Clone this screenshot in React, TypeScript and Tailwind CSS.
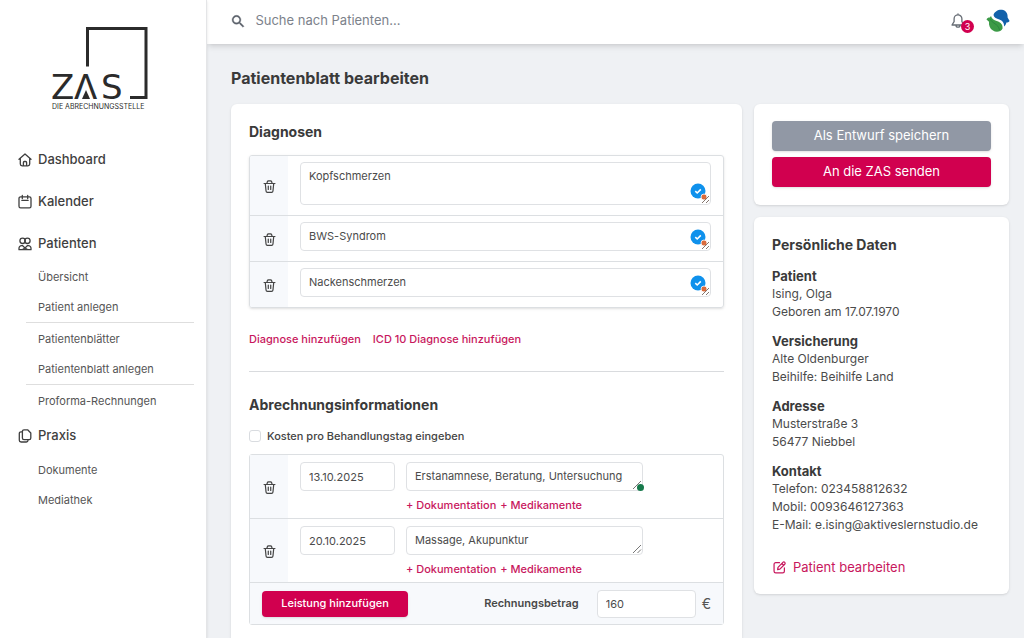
import { useState, type ReactNode } from "react";

function Icon({ children, className = "size-4" }: { children: ReactNode; className?: string }) {
  return (
    <svg viewBox="0 0 16 16" fill="none" stroke="currentColor" strokeWidth="1.3" strokeLinecap="round" strokeLinejoin="round" className={`shrink-0 ${className}`} aria-hidden="true">
      {children}
    </svg>
  );
}

const HomeIcon = () => (
  <Icon>
    <path d="M2 7.2 8 2l6 5.2M3.3 6.3V12a1.8 1.8 0 0 0 1.8 1.8h5.8a1.8 1.8 0 0 0 1.8-1.8V6.3M6.4 13.6V10.500a1 1 0 0 1 1-1h1.200a1 1 0 0 1 1 1v3.100" />
  </Icon>
);
const CalendarIcon = () => (
  <Icon>
    <rect x="2" y="2.800" width="12" height="11" rx="1.600" />
    <path d="M5.300 1.500v3M10.700 1.500v3M4.800 6.300h6.400" />
  </Icon>
);
const UsersIcon = () => (
  <Icon>
    <circle cx="5.600" cy="4.800" r="2.700" />
    <circle cx="10.400" cy="4.800" r="2.700" />
    <path d="M2 13.700v-1.500A2.600 2.600 0 0 1 4.600 9.600h.8L8 12l2.600-2.400h.8a2.600 2.600 0 0 1 2.600 2.600v1.500ZM5.500 13.500 8 12l2.500 1.500" />
  </Icon>
);
const CopyIcon = () => (
  <Icon>
    <path d="M7 1.800h3.600L13.800 5v5a1.600 1.600 0 0 1-1.600 1.600H7A1.600 1.600 0 0 1 5.400 10V3.400A1.600 1.600 0 0 1 7 1.800Z" />
    <path d="M5.200 3.800H4A1.700 1.700 0 0 0 2.300 5.500v6.700A1.800 1.800 0 0 0 4.100 14h5.200a1.700 1.700 0 0 0 1.700-1.700v-.5" />
  </Icon>
);
const TrashIcon = () => (
  <Icon className="size-[15px]">
    <path d="M2.200 4.800h11.600M3.500 4.800l.8 8a1.500 1.500 0 0 0 1.500 1.400h4.400a1.500 1.500 0 0 0 1.500-1.400l.8-8M5.200 4.600l.5-1.700a1.300 1.300 0 0 1 1.200-.9h2.200a1.300 1.300 0 0 1 1.200.9l.5 1.700M6.700 7.500v3.700M9.300 7.500v3.700" />
  </Icon>
);

function Logo() {
  return (
    <svg viewBox="0 0 100 88" className="h-[88px] w-[100px]" role="img" aria-label="ZAS Die Abrechnungsstelle">
      <path d="M37.500 42.500V4.500h58.500v69H80" fill="none" stroke="#2b2b2b" strokeWidth="3" />
      <g fill="#2b2b2b">
        <g fontFamily="DejaVu Sans, sans-serif" fontSize="34">
          <text x="1" y="75">Z</text>
          <text x="24" y="75">Λ</text>
          <text x="51" y="75">S</text>
        </g>
        <text x="2" y="85" fontFamily="Inter, sans-serif" fontSize="7">DIE ABRECHNUNGSSTELLE</text>
      </g>
      <path d="m36 66 4 9h-8Z" fill="#2b2b2b" />
    </svg>
  );
}

function NavMain({ icon, label }: { icon: ReactNode; label: string }) {
  return (
    <a href="#" className="flex h-6 items-center gap-[5px] px-[17px] text-[13px] font-medium text-[#3f3f3f]">
      {icon}
      {label}
    </a>
  );
}

function NavSub({ label }: { label: string }) {
  return (
    <a href="#" className="flex h-[30px] items-center pl-3 text-[11px] text-[#555]">
      {label}
    </a>
  );
}

function Sidebar() {
  return (
    <aside className="relative z-20 w-[207px] shrink-0 border-r border-[#e4e5e7] bg-white shadow-sm">
      <div className="flex justify-center pt-6 pr-[6px]">
        <Logo />
      </div>
      <nav className="flex flex-col pt-9">
        <div className="flex flex-col gap-[18px]">
          <NavMain icon={<HomeIcon />} label="Dashboard" />
          <NavMain icon={<CalendarIcon />} label="Kalender" />
          <NavMain icon={<UsersIcon />} label="Patienten" />
        </div>
        <div className="mt-[6px] mr-3 ml-[26px] flex flex-col">
          <NavSub label="Übersicht" />
          <NavSub label="Patient anlegen" />
          <div className="border-y border-[#dedede] pt-[1px]">
            <NavSub label="Patientenblätter" />
            <NavSub label="Patientenblatt anlegen" />
          </div>
          <div className="pt-[1px]">
            <NavSub label="Proforma-Rechnungen" />
          </div>
        </div>
        <div className="mt-2">
          <NavMain icon={<CopyIcon />} label="Praxis" />
        </div>
        <div className="mt-[7px] ml-[26px]">
          <NavSub label="Dokumente" />
          <NavSub label="Mediathek" />
        </div>
      </nav>
    </aside>
  );
}

function Header() {
  return (
    <header className="relative z-10 flex h-11 items-center justify-between bg-white pr-[14px] pb-[2px] pl-[23px] shadow-md">
      <label className="flex flex-1 items-center gap-[9px] text-[#5b616b]">
        <svg viewBox="0 0 24 24" fill="currentColor" className="size-[17px]" aria-hidden="true">
          <path d="M15.500 14h-.79l-.28-.27A6.470 6.470 0 0 0 16 9.500 6.500 6.500 0 1 0 9.500 16c1.610 0 3.090-.59 4.230-1.570l.27.28v.79l5 4.990L20.490 19l-4.990-5zm-6 0C7.010 14 5 11.990 5 9.500S7.010 5 9.500 5 14 7.010 14 9.500 11.990 14 9.500 14z" stroke="currentColor" strokeWidth=".5" />
        </svg>
        <input type="search" aria-label="Suche nach Patienten" placeholder="Suche nach Patienten..." className="w-full bg-transparent text-[13px] outline-none placeholder:text-[#7c828b]" />
      </label>
      <div className="flex items-center gap-3">
        <button type="button" aria-label="Benachrichtigungen" className="relative flex h-5 w-6 items-center text-[#666c74]">
          <Icon>
            <path d="M8 .8v1M8 1.800a3.900 3.900 0 0 0-3.900 3.900v3L2 12h12l-2.100-3.300v-3A3.900 3.900 0 0 0 8 1.800ZM6 12.200a2 2 0 0 0 4 0" />
          </Icon>
          <span className="absolute right-0 -bottom-[2px] flex size-[13px] items-center justify-center rounded-full bg-[#d1004f] text-[9px] text-white">3</span>
        </button>
        <button type="button" aria-label="Profil">
          <svg viewBox="0 0 24 24" className="size-6" aria-hidden="true">
            <path d="M7.500 6C8.500 2.500 12 .5 16 .8c3.500.4 6 3.400 5.600 7.800l2 3.400c-.8 1-2 1.600-3.200 1.600-.2 1.500-.9 2.800-2.200 4-.1-3.900-1.600-5.700-4.900-7C10.600 9.500 8 8.800 7.500 6Z" fill="#1261aa" />
            <path d="M5 7c.6 2.800 3 4 5.700 4.900 4.300 1.400 6.500 3.900 5.800 7.900-1.500 3-6.300 4-9.500 1.800-3.200-2-4.300-5.100-4-8.900L.5 10.600C1.200 9 2.600 8.500 3.800 8.600Z" fill="#3c9a46" />
            <path d="M4.500 10c1 4.500 8 4.500 9 11" fill="none" stroke="#27813c" strokeWidth=".8" />
          </svg>
        </button>
      </div>
    </header>
  );
}

const field = "block rounded border border-[#dfe1e4] bg-white px-2 py-[5px] text-[11px] leading-4 text-[#4b4b4b] outline-none";
const link = "text-[#c8175d]";
const heading = "text-sm leading-5 font-bold text-[#3a3a3a]";

function Grip({ color = "#777" }: { color?: string }) {
  return (
    <svg viewBox="0 0 10 10" className="size-[10px]" stroke={color} strokeWidth="1" aria-hidden="true">
      <path d="m1 9 8-8M5.500 9 9 5.500" />
    </svg>
  );
}

function DeleteCell({ label }: { label: string }) {
  return (
    <td className="w-[38px] bg-[#f7f9fc] pb-[2px] text-center align-middle">
      <button type="button" aria-label={label} className="inline-flex align-middle text-[#454545]">
        <TrashIcon />
      </button>
    </td>
  );
}

const diagnoses = [
  { text: "Kopfschmerzen", rows: "h-[43px]" },
  { text: "BWS-Syndrom", rows: "h-[29px]" },
  { text: "Nackenschmerzen", rows: "h-[29px]" },
];

function Diagnoses() {
  return (
    <section>
      <h2 className={heading}>Diagnosen</h2>
      <div className="mt-[13px] overflow-hidden rounded-[3px] border border-[#dcdfe2] shadow-sm">
        <table className="w-full border-collapse">
          <tbody className="divide-y divide-[#dcdfe2]">
            {diagnoses.map((d) => (
              <tr key={d.text}>
                <DeleteCell label={`${d.text} löschen`} />
                <td className="pt-[6px] pr-3 pb-[10px] pl-3">
                  <div className="relative">
                    <textarea aria-label="Diagnose" defaultValue={d.text} className={`${field} ${d.rows} w-full resize-none overflow-hidden`} />
                    <span className="absolute right-0 bottom-[1px] size-5">
                      <svg viewBox="0 0 20 20" className="size-5 overflow-visible" aria-hidden="true">
                        <circle cx="7" cy="7" r="7.500" fill="#0f91ec" />
                        <path d="m4.300 7.200 1.900 1.800 3.600-3.600" fill="none" stroke="#fff" strokeWidth="1.600" />
                        <circle cx="13" cy="13" r="3" fill="#d96b3c" stroke="#fff" strokeWidth=".8" />
                        <path d="m11 19 7-7M15 19l3-3" stroke="#85766e" strokeWidth="1" />
                      </svg>
                    </span>
                  </div>
                </td>
              </tr>
            ))}
          </tbody>
        </table>
      </div>
      <div className="mt-[23px] flex gap-3 text-[11px] leading-4 font-medium">
        <a href="#" className={link}>Diagnose hinzufügen</a>
        <a href="#" className={link}>ICD 10 Diagnose hinzufügen</a>
      </div>
    </section>
  );
}

const services = [
  { date: "13.10.2025", text: "Erstanamnese, Beratung, Untersuchung", marked: true },
  { date: "20.10.2025", text: "Massage, Akupunktur", marked: false },
];

function Billing() {
  const [perDay, setPerDay] = useState(false);
  return (
    <section className="mt-6 border-t border-[#d9dbde] pt-[23px]">
      <h2 className={heading}>Abrechnungsinformationen</h2>
      <label className="mt-[13px] flex items-center gap-[6px] text-[11px] leading-4 font-medium text-[#444]">
        <input type="checkbox" checked={perDay} onChange={(e) => setPerDay(e.target.checked)} className="size-3 appearance-none rounded-[3px] border border-[#d9dce0] bg-white checked:bg-[#d1004f]" />
        Kosten pro Behandlungstag eingeben
      </label>
      <div className="mt-[10px] rounded-[3px] border border-[#dcdfe2]">
        <table className="w-full border-collapse">
          <tbody className="divide-y divide-[#dcdfe2]">
            {services.map((s) => (
              <tr key={s.date}>
                <DeleteCell label={`Leistung vom ${s.date} löschen`} />
                <td className="w-[118px] pt-[7px] pl-3 align-top">
                  <input type="text" aria-label="Datum" defaultValue={s.date} className={`${field} h-[29px] w-[95px]`} />
                </td>
                <td className="pt-[7px] pb-[5px] align-top">
                  <div className="relative w-[237px]">
                    <textarea aria-label="Leistung" defaultValue={s.text} className={`${field} h-[29px] w-full resize-none overflow-hidden whitespace-nowrap`} />
                    <span className="absolute right-[1px] bottom-[1px]">
                      <Grip />
                    </span>
                    {s.marked && <span className="absolute -right-[1px] bottom-0 size-[7px] rounded-full bg-[#16794b]" />}
                  </div>
                  <div className="mt-[6px] flex gap-1 text-[11px] leading-4 font-medium">
                    <a href="#" className={link}>+ Dokumentation</a>
                    <a href="#" className={link}>+ Medikamente</a>
                  </div>
                </td>
              </tr>
            ))}
          </tbody>
        </table>
        <div className="flex h-[42px] items-center border-t border-[#dcdfe2] bg-[#f7f9fc] px-3">
          <button type="button" className="h-[26px] w-[146px] rounded bg-[#d1004f] text-[11px] font-medium text-white shadow-sm">Leistung hinzufügen</button>
          <label htmlFor="amount" className="ml-auto text-[11px] font-semibold text-[#484848]">Rechnungsbetrag</label>
          <input id="amount" type="text" defaultValue="160" className={`${field} ml-[18px] h-[28px] w-[99px]`} />
          <span className="ml-[6px] text-sm text-[#555]">€</span>
        </div>
      </div>
    </section>
  );
}

const details = [
  { title: "Patient", lines: ["Ising, Olga", "Geboren am 17.07.1970"] },
  { title: "Versicherung", lines: ["Alte Oldenburger", "Beihilfe: Beihilfe Land"] },
  { title: "Adresse", lines: ["Musterstraße 3", "56477 Niebbel"] },
  { title: "Kontakt", lines: ["Telefon: 023458812632", "Mobil: 0093646127363", "E-Mail: e.ising@aktiveslernstudio.de"] },
];

const card = "rounded-md bg-white shadow-sm";

export default function App() {
  return (
    <div className="flex min-h-screen bg-[#eff1f4] font-['Inter','Noto_Sans',sans-serif]">
      <Sidebar />
      <div className="flex min-w-0 flex-1 flex-col">
        <Header />
        <main className="flex flex-1 flex-col pt-[22px] pr-[15px] pl-6">
          <h1 className="text-base leading-6 font-bold text-[#3a3a3a]">Patientenblatt bearbeiten</h1>
          <div className="mt-[14px] flex flex-1 gap-3">
            <div className={`${card} min-w-0 flex-1 rounded-b-none px-[18px] pt-[18px]`}>
              <Diagnoses />
              <Billing />
            </div>
            <div className="flex w-[255px] shrink-0 flex-col gap-3">
              <div className={`${card} flex flex-col gap-[6px] px-[18px] pt-[17px] pb-[18px] text-[13px] text-white`}>
                <button type="button" className="h-[30px] rounded bg-[#9198a5] shadow-sm">Als Entwurf speichern</button>
                <button type="button" className="h-[30px] rounded bg-[#d1004f] shadow-sm">An die ZAS senden</button>
              </div>
              <div className={`${card} px-[18px] pt-[18px] pb-[18px]`}>
                <h2 className={heading}>Persönliche Daten</h2>
                <div className="mt-3 flex flex-col gap-[11px] text-xs leading-[18px] text-[#4b4b4b]">
                  {details.map((d) => (
                    <div key={d.title}>
                      <h3 className="text-[13px] leading-[18px] font-bold text-[#3a3a3a]">{d.title}</h3>
                      {d.lines.map((l) => (
                        <p key={l}>{l}</p>
                      ))}
                    </div>
                  ))}
                </div>
                <a href="#" className={`mt-6 flex items-center gap-[6px] text-[13px] leading-[18px] ${link}`}>
                  <Icon className="size-[15px]">
                    <path d="M8 2.800H4A1.800 1.800 0 0 0 2.200 4.600V12A1.800 1.800 0 0 0 4 13.800h7.400a1.800 1.800 0 0 0 1.800-1.800V8.500M6 10.200l.4-2.400 5.200-5.300a1.400 1.400 0 0 1 2 2L8.400 9.800ZM10.500 3.700l2 2" />
                  </Icon>
                  Patient bearbeiten
                </a>
              </div>
            </div>
          </div>
        </main>
      </div>
    </div>
  );
}
